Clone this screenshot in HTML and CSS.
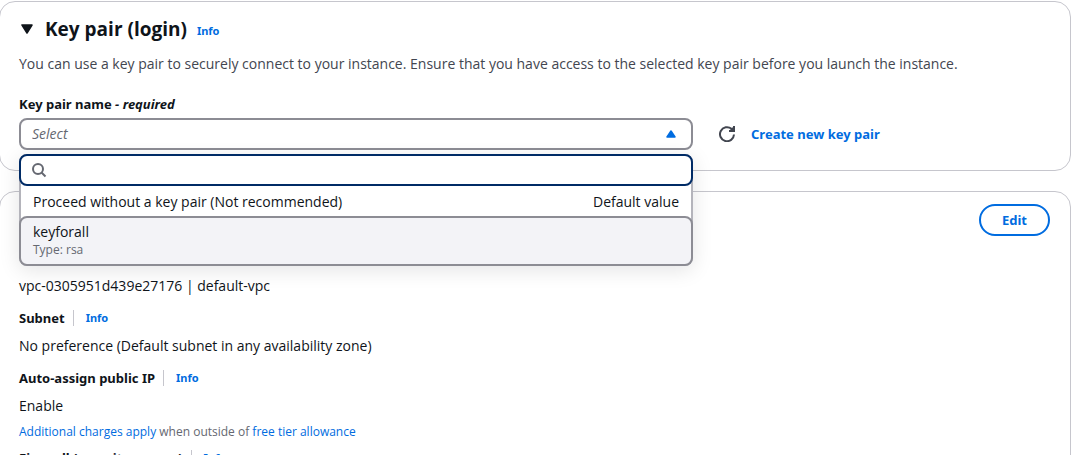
FILE: index.html
```html
<!DOCTYPE html>
<html lang="en">
<head>
<meta charset="utf-8">
<meta name="viewport" content="width=device-width, initial-scale=1">
<title>Launch an instance</title>
<link rel="stylesheet" href="styles.css">
</head>
<body>
<main class="page">
  <section class="card card-keypair">
    <header class="card-head">
      <button class="toggle" type="button" aria-expanded="true" aria-label="Collapse key pair section">
        <svg width="12" height="10" viewBox="0 0 12 10" aria-hidden="true"><path d="M1 1h10L6 9z" fill="#0f141a" stroke="#0f141a" stroke-width="1.5" stroke-linejoin="round"/></svg>
      </button>
      <h2 class="title">Key pair (login)</h2>
      <a class="info" href="#">Info</a>
    </header>
    <p class="description">You can use a key pair to securely connect to your instance. Ensure that you have access to the selected key pair before you launch the instance.</p>
    <label class="label" for="keypair">Key pair name <em>- required</em></label>
    <div class="field-row">
      <div class="select-box">
        <select class="select" id="keypair" required>
          <option value="">Select</option>
        </select>
        <svg class="caret" width="10" height="8" viewBox="0 0 10 8" aria-hidden="true"><path d="M5 1 9 7H1z" fill="#006ce0" stroke="#006ce0" stroke-width="1.5" stroke-linejoin="round"/></svg>
        <div class="menu">
          <div class="search">
            <svg width="16" height="16" viewBox="0 0 16 16" aria-hidden="true" fill="none" stroke="#656871" stroke-width="2"><circle cx="7" cy="7" r="5"/><path d="m10.500 10.500 4 4"/></svg>
            <input class="search-input" type="text" aria-label="Filter key pairs">
          </div>
          <ul class="options" role="listbox" aria-label="Key pairs">
            <li class="option" role="option" aria-selected="false"><span>Proceed without a key pair (Not recommended)</span><span>Default value</span></li>
            <li class="option option-active" role="option" aria-selected="false"><span>keyforall</span><small class="option-note">Type: rsa</small></li>
          </ul>
        </div>
      </div>
      <div class="actions">
        <button class="refresh" type="button" aria-label="Refresh key pairs">
          <svg width="16" height="16" viewBox="0 0 16 16" aria-hidden="true" fill="none" stroke="#424650" stroke-width="2"><path d="M15 8.500A7 7 0 1 1 12.500 2.800L14 4.500"/><path d="M15 0v5h-5" fill="#424650"/></svg>
        </button>
        <a class="create" href="#">Create new key pair</a>
      </div>
    </div>
  </section>

  <section class="card card-network">
    <header class="network-head">
      <button class="edit" type="button">Edit</button>
    </header>
    <div class="settings">
      <div class="setting">
        <p class="value">vpc-0305951d439e27176 | default-vpc</p>
      </div>
      <div class="setting">
        <h3 class="setting-name">Subnet <a class="info info-split" href="#">Info</a></h3>
        <p class="value">No preference (Default subnet in any availability zone)</p>
      </div>
      <div class="setting">
        <h3 class="setting-name">Auto-assign public IP <a class="info info-split" href="#">Info</a></h3>
        <p class="value">Enable</p>
      </div>
    </div>
    <p class="note"><a href="#">Additional charges apply</a> when outside of <a href="#">free tier allowance</a></p>
    <h3 class="setting-name">Firewall (security groups) <a class="info info-split" href="#">Info</a></h3>
  </section>
</main>
</body>
</html>
```
FILE: styles.css
```css
* { box-sizing: border-box; }

body {
  margin: 0;
  background: #fff;
  color: #0f141a;
  font: 14px/20px "Open Sans", "Noto Sans", sans-serif;
}

h2, h3, p, ul { margin: 0; padding: 0; }
a { color: #006ce0; text-decoration: none; }
button, select, input { font: inherit; }

.page {
  display: flex;
  flex-direction: column;
  gap: 20px;
  margin: 1px 9px 0 -1px;
}

.card {
  border: 1px solid #c6c6cd;
  border-radius: 16px;
  padding: 12px 20px 20px 19px;
  background: #fff;
}

.card-head {
  display: flex;
  align-items: center;
  gap: 12px;
  padding: 3px 0 5px;
}

.toggle {
  display: flex;
  padding: 0 0 0 2px;
  border: 0;
  background: none;
}

.title {
  font-size: 19px;
  line-height: 24px;
}

.info {
  font-family: "Noto Sans", sans-serif;
  font-size: 11px;
  font-weight: 700;
}

.card-head .info {
  padding-top: 4px;
  margin-left: -2px;
}

.description {
  margin-top: 8px;
  color: #424650;
}

.label,
.create,
.edit,
.setting-name {
  font-family: "Noto Sans", sans-serif;
  font-size: 13px;
  font-weight: 700;
}

.label {
  display: block;
  margin: 20px 0 4px;
}

.field-row {
  display: grid;
  grid-template-columns: minmax(0, 674px) auto;
  justify-content: start;
  align-items: center;
  gap: 26px;
}

.select-box { position: relative; }

.select {
  display: block;
  width: 100%;
  height: 32px;
  padding: 0 11px;
  border: 2px solid #8c8c94;
  border-radius: 8px;
  background: #fff;
  color: #656871;
  font-style: italic;
  appearance: none;
}

.caret {
  position: absolute;
  top: 12px;
  right: 17px;
  pointer-events: none;
}

.menu {
  position: absolute;
  z-index: 1;
  top: calc(100% + 4px);
  left: 0;
  right: 0;
  border-radius: 8px;
  background: #fff;
  box-shadow: inset 0 0 0 2px #b4b4bb, 0 4px 20px 1px rgba(0, 7, 22, 0.1);
}

.search {
  display: flex;
  align-items: center;
  gap: 8px;
  height: 32px;
  padding: 0 10px;
  border: 2px solid #002b66;
  border-radius: 8px;
  background: #fff;
}

.search-input {
  flex: 1;
  min-width: 0;
  padding: 0;
  border: 0;
  outline: 0;
  background: none;
}

.options { list-style: none; }

.option {
  display: flex;
  justify-content: space-between;
  padding: 6px 14px 4px;
}

.option-active {
  flex-direction: column;
  padding: 4px 12px;
  border: 2px solid #8c8c94;
  border-radius: 8px;
  background: #f3f3f7;
}

.option-note {
  color: #656871;
  font-size: 12px;
  line-height: 16px;
  padding-bottom: 2px;
}

.actions {
  display: flex;
  align-items: center;
  gap: 16px;
}

.refresh {
  display: flex;
  padding: 0;
  border: 0;
  background: none;
}

.network-head {
  display: flex;
  justify-content: flex-end;
}

.edit {
  height: 32px;
  padding: 0 21px;
  border: 2px solid #006ce0;
  border-radius: 16px;
  background: #fff;
  color: #006ce0;
}

.settings {
  display: flex;
  flex-direction: column;
  gap: 12px;
  margin-top: 40px;
}

.setting {
  display: flex;
  flex-direction: column;
  gap: 8px;
}

.setting-name {
  display: flex;
  align-items: center;
  gap: 8px;
}

.info-split {
  padding-left: 12px;
  border-left: 1px solid #c6c6cd;
  line-height: 16px;
}

.note {
  margin: 6px 0;
  color: #656871;
  font-size: 12px;
}
```
